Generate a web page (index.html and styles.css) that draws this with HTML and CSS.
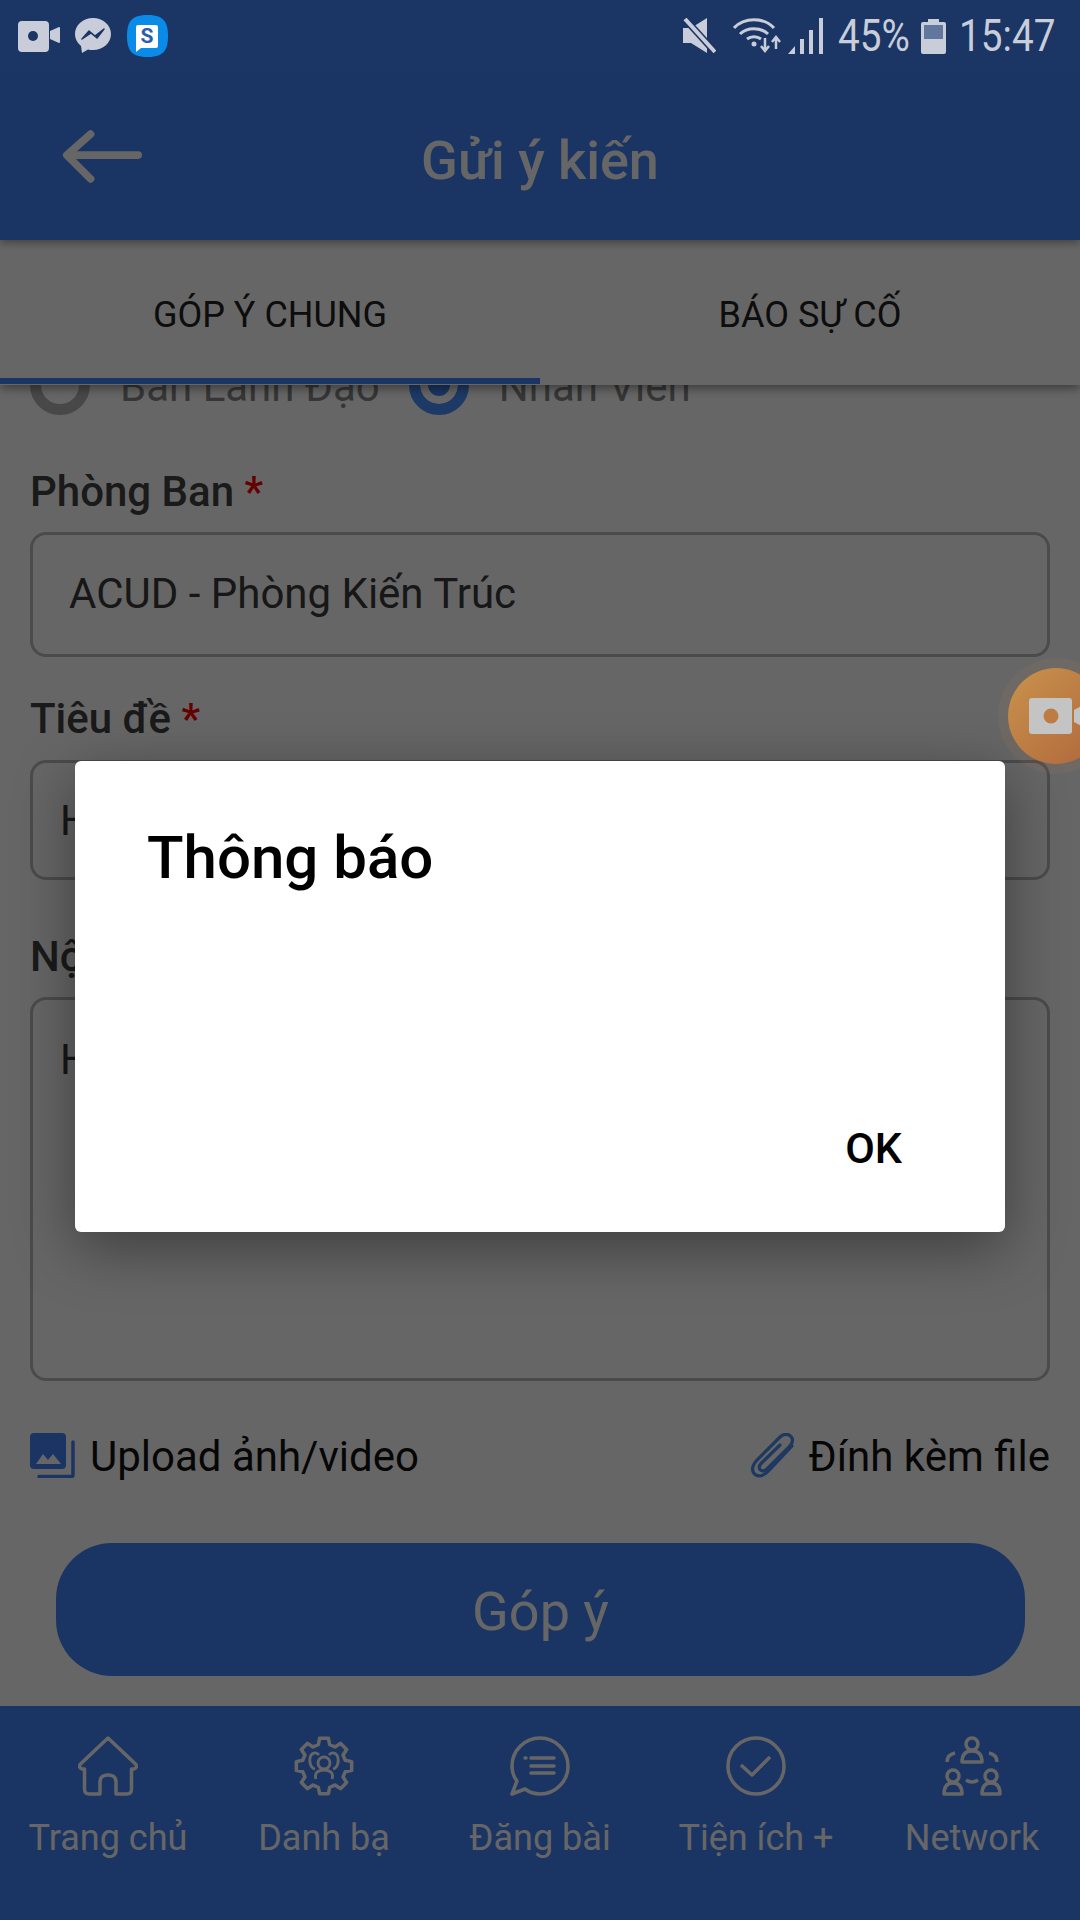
FILE: index.html
```html
<!DOCTYPE html>
<html lang="vi">
<head>
    <meta charset="UTF-8">
    <meta name="viewport" content="width=device-width, initial-scale=1.0">
    <title>Gửi ý kiến</title>
    <link rel="stylesheet" href="styles.css">
</head>
<body>
    <div class="app">
        <div class="status-bar">
            <div class="status-left">
                <svg class="st-cam" viewBox="0 0 42 32"><rect x="0" y="1" width="31" height="31" rx="4" fill="#c8cdd9"/><path d="M32 11 L41 7 Q42 7 42 8 V22 Q42 23 41 23 L32 19 Z" fill="#c8cdd9"/><circle cx="15" cy="16" r="5" fill="#1b3564"/></svg>
                <svg class="st-msg" viewBox="0 0 36 36"><path d="M18 0 C8 0 0 7 0 16 C0 21 2.500 25 6 28 L7 35 L13 31.500 C14.500 32 16 32 18 32 C28 32 36 25 36 16 C36 7 28 0 18 0 Z" fill="#c8cdd9"/><path d="M7 21 L14 13 L20 18 L29 11 L22 20 L16 15 Z" fill="#1b3564" stroke="#1b3564" stroke-width="1.500" stroke-linejoin="round"/></svg>
                <svg class="st-s" viewBox="0 0 41 42"><path d="M20.500 0 C36 0 41 6 41 21 C41 36 36 42 20.500 42 C5 42 0 36 0 21 C0 6 5 0 20.500 0 Z" fill="#0a8be8"/><path d="M11 10 H29 Q31 10 31 12 V31 Q31 33 29 33 H14 L9 37 V12 Q9 10 11 10 Z" fill="#fff"/><text x="20" y="28" class="st-s-letter">S</text></svg>
            </div>
            <div class="status-right">
                <svg class="st-mute" viewBox="0 0 33 36"><path d="M0 10 H8 L24 0 V35 L8 25 H0 Z" fill="#c8cdd9"/><path d="M1 0 L32 34" stroke="#1b3564" stroke-width="7"/><path d="M2 1 L32 34" stroke="#c8cdd9" stroke-width="4"/></svg>
                <svg class="st-wifi" viewBox="0 0 48 36"><g fill="none" stroke="#c8cdd9" stroke-width="3"><path d="M1 10 C11 -1 31 -1 41 10"/><path d="M7 16 C14 9 28 9 35 16"/><path d="M14 21 C18 18 24 18 28 21"/></g><circle cx="21" cy="26" r="2.500" fill="#c8cdd9"/><path d="M32 20 V31 M28 28 L32 33 L36 28" fill="none" stroke="#c8cdd9" stroke-width="2.500"/><path d="M43 31 V21 M39 24 L43 19 L47 24" fill="none" stroke="#c8cdd9" stroke-width="2.500"/></svg>
                <svg class="st-signal" viewBox="0 0 36 36"><path d="M0 36 L7 28 V36 Z M12 21 H16 V36 H12 Z M21 12 H25 V36 H21 Z M31 0 H35 V36 H31 Z" fill="#c8cdd9"/></svg>
                <span class="st-text st-pct">45%</span>
                <svg class="st-batt" viewBox="0 0 25 35"><path d="M7 0 H18 V3 H23 Q25 3 25 5 V33 Q25 35 23 35 H2 Q0 35 0 33 V5 Q0 3 2 3 H7 Z" fill="#c8cdd9"/><rect x="3" y="6" width="19" height="14" fill="#62779d"/></svg>
                <span class="st-text st-clock">15:47</span>
            </div>
        </div>

        <div class="header">
            <svg class="back-arrow" viewBox="0 0 84 56"><path d="M80 26 H6 M30 4 L5 26 L30 51" fill="none" stroke="#fff" stroke-width="8" stroke-linecap="round" stroke-linejoin="round"/></svg>
            <div class="header-title">Gửi ý kiến</div>
        </div>

        <div class="tabs">
            <div class="tab tab-active">GÓP Ý CHUNG</div>
            <div class="tab">BÁO SỰ CỐ</div>
        </div>

        <div class="form">
            <div class="radio-row">
                <div class="radio"></div>
                <span class="radio-label">Ban Lãnh Đạo</span>
                <div class="radio radio-on"></div>
                <span class="radio-label">Nhân Viên</span>
            </div>

            <div class="label label-first">Phòng Ban <span class="req">*</span></div>
            <div class="field field-picker">ACUD - Phòng Kiến Trúc</div>

            <div class="label">Tiêu đề <span class="req">*</span></div>
            <div class="field field-title">H</div>

            <div class="label label-wide">Nội dung <span class="req">*</span></div>
            <div class="field field-body">H</div>

            <div class="attach-row">
                <div class="attach">
                    <svg class="icon-upload" viewBox="0 0 45 45"><rect x="0" y="0" width="36" height="36" rx="4" fill="#4384fa"/><path d="M6 31 L13 21 L18 27 L23 21 L31 31 Z" fill="#fff"/><path d="M43 9 V42 Q43 43.500 41.500 43.500 H9" fill="none" stroke="#4384fa" stroke-width="3.500" stroke-linecap="round"/></svg>
                    <span>Upload ảnh/video</span>
                </div>
                <div class="attach">
                    <svg class="icon-clip" viewBox="0 0 43 45"><path d="M41 13 L17.500 38 C13 43 7 44.500 3.500 41 C0 37 2 31.500 6 27 L29 4 C33 0 38 1 40 3.500 C42.500 6.500 41.500 10.500 38 14 L16 36 C13.500 38.500 10.500 38.500 9 36.500 C7.500 34.500 8.500 32 10.500 30 L29 12" fill="none" stroke="#4a90f5" stroke-width="3.200" stroke-linecap="round"/></svg>
                    <span>Đính kèm file</span>
                </div>
            </div>

            <div class="submit">Góp ý</div>
        </div>

        <div class="bottom-nav">
            <div class="nav-item">
                <svg class="nav-icon" viewBox="0 0 60 60"><path d="M30 2 L2.500 28 Q0 31 4 33 H6.500 V53 Q6.500 58 11 58 H22 V46 Q22 39 30 39 Q38 39 38 46 V58 H49 Q53.500 58 53.500 53 V33 H56 Q60 31 57.500 28 Z"/></svg>
                <span>Trang chủ</span>
            </div>
            <div class="nav-item">
                <svg class="nav-icon" viewBox="0 0 60 60"><path d="M24.310 8.750 L25.620 2.340 H34.380 L35.690 8.750 L41 10.950 L46.460 7.350 L52.650 13.540 L49.050 19 L51.250 24.310 L57.660 25.620 V34.380 L51.250 35.690 L49.050 41 L52.650 46.460 L46.460 52.650 L41 49.050 L35.690 51.250 L34.380 57.660 H25.620 L24.310 51.250 L19 49.050 L13.540 52.650 L7.350 46.460 L10.950 41 L8.750 35.690 L2.340 34.380 V25.620 L8.750 24.310 L10.950 19 L7.350 13.540 L13.540 7.350 L19 10.950 Z"/><circle class="thin" cx="30" cy="27" r="6"/><path class="thin" d="M25 19 C22 15 17 17 16 22 C15 27 17 32 21 33 M35 19 C38 15 43 17 44 22 C45 27 43 32 39 33 M22 43 C20 37 24 34 30 34 C36 34 40 37 38 43"/></svg>
                <span>Danh bạ</span>
            </div>
            <div class="nav-item">
                <svg class="nav-icon" viewBox="0 0 60 60"><path d="M30 2 A28 28 0 1 1 30 58 C24 58 19 56 15 53 L2 58 L7 45 C3 40 2 35 2 30 A28 28 0 0 1 30 2 Z"/><path d="M21 22 H44 M21 30 H44 M21 37 H44 M15 22 H16" stroke-linecap="round"/></svg>
                <span>Đăng bài</span>
            </div>
            <div class="nav-item">
                <svg class="nav-icon" viewBox="0 0 60 60"><circle cx="30" cy="30" r="28"/><path d="M15 29 L26 39 L44 21"/></svg>
                <span>Tiện ích +</span>
            </div>
            <div class="nav-item">
                <svg class="nav-icon" viewBox="0 0 60 60"><circle cx="30" cy="8" r="6"/><path d="M20 26 C20 18 24 15 30 15 C36 15 40 18 40 26 Z"/><path d="M5 26 C5 21 8 18 13 17 M55 26 C55 21 52 18 47 17 M24 44 Q30 48 36 44"/><circle cx="11" cy="40" r="6"/><path d="M2 58 C2 51 5 47 11 47 C17 47 20 51 20 58 Z"/><circle cx="49" cy="40" r="6"/><path d="M40 58 C40 51 43 47 49 47 C55 47 58 51 58 58 Z"/></svg>
                <span>Network</span>
            </div>
        </div>

        <div class="scrim">
            <div class="dialog">
                <div class="dialog-title">Thông báo</div>
                <div class="dialog-actions"><span class="dialog-ok">OK</span></div>
            </div>
        </div>

        <div class="float-rec">
            <svg class="float-cam" viewBox="0 0 72 36"><rect x="0" y="0" width="43" height="36" rx="3" fill="#c4c4c4"/><circle cx="22" cy="18" r="7.500" fill="#bd7c42"/><path d="M45 12 L60 4 V32 L45 24 Z" fill="#c4c4c4"/></svg>
        </div>
    </div>
</body>
</html>
```

FILE: styles.css
```css
* {
    box-sizing: border-box;
}
body {
    margin: 0;
    background-color: #fff;
    font-family: Roboto, "Noto Sans", sans-serif;
}
.app {
    width: 1080px;
    height: 1920px;
    position: relative;
    overflow: hidden;
    display: flex;
    flex-direction: column;
}

/* status bar */
.status-bar {
    height: 72px;
    flex: none;
    background-color: #1b3564;
    display: flex;
    justify-content: space-between;
    align-items: center;
    padding: 0 25px 0 18px;
    position: relative;
    z-index: 5;
}
.status-left,
.status-right {
    display: flex;
    align-items: center;
}
.st-cam { width: 42px; height: 32px; margin-right: 15px; }
.st-msg { width: 36px; height: 36px; margin-right: 16px; }
.st-s { width: 41px; height: 42px; }
.st-s-letter {
    font-family: Roboto, sans-serif;
    font-size: 21px;
    font-weight: 700;
    fill: #2a5db0;
    text-anchor: middle;
}
.st-mute { width: 33px; height: 36px; margin-right: 17px; }
.st-wifi { width: 48px; height: 36px; margin-right: 7px; }
.st-signal { width: 36px; height: 36px; margin-right: 14px; }
.st-batt { width: 25px; height: 35px; margin-right: 13px; }
.st-text {
    display: inline-block;
    color: #c8cdd9;
    font-size: 44px;
    line-height: 44px;
    white-space: nowrap;
    transform: scaleX(0.88);
    transform-origin: left center;
}
.st-pct { width: 70px; margin-right: 13px; }
.st-clock { width: 96px; }

/* header */
.header {
    height: 168px;
    flex: none;
    background-color: #4384fa;
    display: grid;
    grid-template-columns: 1fr auto 1fr;
    align-items: center;
    padding: 0 62px;
    box-shadow: 0 3px 8px rgba(0, 0, 0, 0.35);
    position: relative;
    z-index: 3;
}
.back-arrow {
    width: 80px;
    height: 56px;
    margin-top: 2px;
}
.header-title {
    color: #fff;
    font-size: 54px;
    font-weight: 500;
    margin-top: 8px;
}

/* tabs */
.tabs {
    height: 145px;
    flex: none;
    display: flex;
    background-color: #fff;
    box-shadow: 0 3px 10px rgba(0, 0, 0, 0.45);
    position: relative;
    z-index: 2;
}
.tab {
    flex: 1;
    display: flex;
    align-items: center;
    justify-content: center;
    font-size: 36px;
    color: #222;
    padding-top: 12px;
    border-bottom: 6px solid transparent;
    margin-bottom: 1px;
}
.tab-active {
    border-bottom-color: #4384fa;
}

/* form, scrolled a little under the tabs */
.form {
    flex: 1;
    min-height: 0;
    overflow: hidden;
    background-color: #fff;
    padding: 0 30px;
}
.radio-row {
    height: 60px;
    margin-top: -30px;
    display: flex;
    align-items: center;
}
.radio {
    width: 60px;
    height: 60px;
    flex: none;
    border-radius: 50%;
    border: 11px solid #b4b4b4;
}
.radio-on {
    border-color: #4a90ff;
    background-color: #4384fa;
    box-shadow: inset 0 0 0 8px #fff;
}
.radio-label {
    font-size: 42px;
    color: #888;
    margin: 3px 29px 0 30px;
    line-height: 60px;
}
.label {
    font-size: 42px;
    font-weight: 500;
    line-height: 44px;
    color: #414141;
    margin: 40px 0 19px;
}
.label-first {
    margin-top: 55px;
    margin-bottom: 18px;
}
.label-wide {
    margin-top: 55px;
    margin-bottom: 18px;
}
.req {
    color: #f00;
}
.field {
    border: 3px solid #bbb;
    border-radius: 16px;
    font-size: 42px;
    color: #3a3a3a;
    display: flex;
    align-items: center;
}
.field-picker {
    height: 125px;
    padding: 0 0 2px 36px;
}
.field-title {
    height: 120px;
    padding-left: 27px;
}
.field-body {
    height: 384px;
    padding: 35px 0 0 27px;
    align-items: flex-start;
}
.attach-row {
    display: flex;
    justify-content: space-between;
    align-items: center;
    height: 45px;
    margin-top: 52px;
}
.attach {
    display: flex;
    align-items: center;
    gap: 15px;
    font-size: 42px;
    color: #111;
}
.attach span {
    margin-top: 2px;
}
.icon-upload { width: 45px; height: 45px; }
.icon-clip { width: 43px; height: 45px; }
.submit {
    height: 133px;
    margin: 65px 25px 0 26px;
    background-color: #4384fa;
    border-radius: 56px;
    color: #fff;
    font-size: 54px;
    padding-top: 4px;
    display: flex;
    align-items: center;
    justify-content: center;
}

/* bottom nav */
.bottom-nav {
    height: 214px;
    flex: none;
    background-color: #4384fa;
    display: grid;
    grid-template-columns: repeat(5, 216px);
    padding-top: 30px;
    align-items: start;
}
.nav-item {
    display: flex;
    flex-direction: column;
    align-items: center;
    color: #fff;
    font-size: 36px;
    line-height: 42px;
    gap: 21px;
}
.nav-icon {
    width: 60px;
    height: 60px;
    fill: none;
    stroke: #fff;
    stroke-width: 3.500;
    stroke-linejoin: round;
}
.nav-icon .thin {
    stroke-width: 2.800;
}

/* dialog over everything */
.scrim {
    position: absolute;
    top: 72px;
    left: 0;
    right: 0;
    bottom: 0;
    background-color: rgba(0, 0, 0, 0.6);
    display: flex;
    align-items: center;
    justify-content: center;
    z-index: 4;
}
.dialog {
    width: 930px;
    height: 471px;
    background-color: #fff;
    border-radius: 6px;
    box-shadow: 0 16px 60px rgba(0, 0, 0, 0.4);
    display: flex;
    flex-direction: column;
    justify-content: space-between;
}
.dialog-title {
    font-size: 60px;
    font-weight: 500;
    line-height: 66px;
    color: #000;
    padding: 64px 0 0 72px;
}
.dialog-actions {
    display: flex;
    justify-content: flex-end;
    padding: 0 103px 61px 0;
}
.dialog-ok {
    font-size: 43px;
    font-weight: 500;
    line-height: 46px;
    color: #000;
}
.float-rec {
    position: absolute;
    left: 1008px;
    top: 668px;
    width: 96px;
    height: 96px;
    border-radius: 50%;
    background: linear-gradient(135deg, #c9934c, #b0663c);
    box-shadow: 0 0 0 10px rgba(200, 140, 90, 0.08);
    z-index: 6;
}
.float-cam {
    position: absolute;
    left: 21px;
    top: 30px;
    width: 72px;
    height: 36px;
}
```
